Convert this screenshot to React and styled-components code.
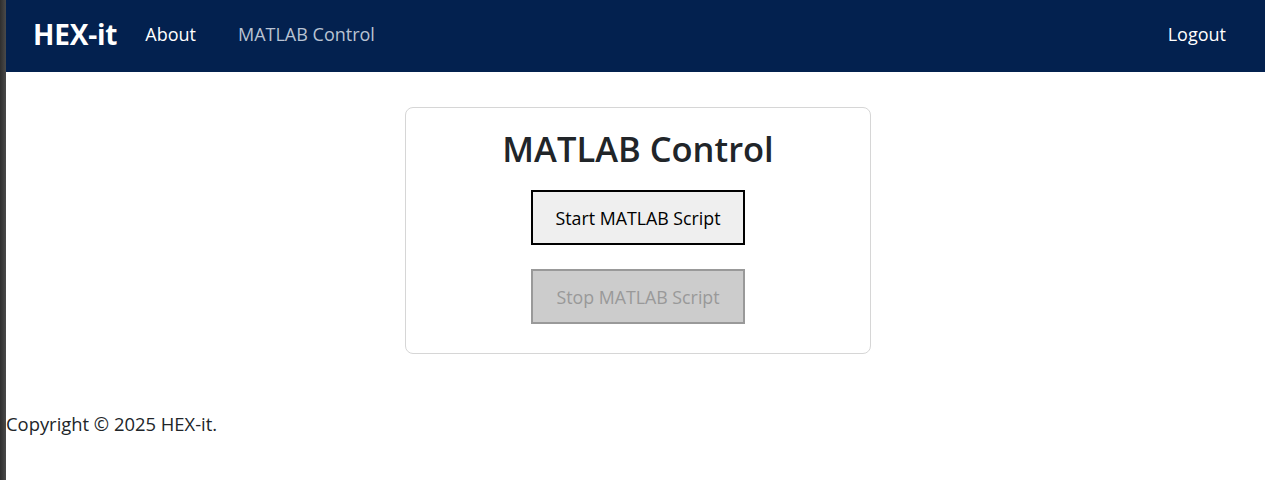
import React from 'react'
import styled, { createGlobalStyle } from 'styled-components'

const GlobalStyle = createGlobalStyle`
  html, body {
    margin: 0;
    padding: 0;
    background: #ffffff;
  }
  body {
    font-family: "Open Sans", "Noto Sans", sans-serif;
    color: #212529;
  }
`;

const App = () => {
  return (
    <>
      <GlobalStyle />
      <Frame>
        <Edge />
        <Page>
          <Navbar>
            <Brand>HEX-it</Brand>
            <NavLinks>
              <NavLink>About</NavLink>
              <NavLink $muted>MATLAB Control</NavLink>
            </NavLinks>
            <NavLink>Logout</NavLink>
          </Navbar>

          <Main>
            <Card>
              <Title>MATLAB Control</Title>
              <ScriptButton>Start MATLAB Script</ScriptButton>
              <ScriptButton disabled>Stop MATLAB Script</ScriptButton>
            </Card>
          </Main>

          <Footer>Copyright © 2025 HEX-it.</Footer>
        </Page>
      </Frame>
    </>
  )
};

const Frame = styled.div`
  display: flex;
  min-height: 480px;
`;

const Edge = styled.div`
  width: 6px;
  flex-shrink: 0;
  background: linear-gradient(to right, #2e2e2e, #4a4a4a);
`;

const Page = styled.div`
  flex: 1;
  display: flex;
  flex-direction: column;
`;

const Navbar = styled.nav`
  height: 72px;
  box-sizing: border-box;
  background-color: #03214f;
  display: flex;
  align-items: center;
  padding: 0 39px 5px 27px;
`;

const Brand = styled.div`
  font-size: 28px;
  font-weight: 700;
  color: #ffffff;
  letter-spacing: -0.2px;
`;

const NavLinks = styled.div`
  display: flex;
  flex: 1;
  gap: 42px;
  margin-left: 28px;
`;

const NavLink = styled.a`
  font-size: 18px;
  color: ${p => (p.$muted ? '#b9c3d3' : '#ffffff')};
  cursor: pointer;
  text-decoration: none;
`;

const Main = styled.main`
  display: flex;
  justify-content: center;
  padding-top: 35px;
  padding-left: 5px;
`;

const Card = styled.section`
  width: 464px;
  border: 1px solid #d6d6d6;
  border-radius: 8px;
  padding: 16px 0 29px;
  display: flex;
  flex-direction: column;
  align-items: center;
  gap: 24px;
`;

const Title = styled.h1`
  font-size: 34.5px;
  font-weight: 600;
  color: #212529;
  margin: 0 0 -8px;
  line-height: 50px;
`;

const ScriptButton = styled.button`
  width: 214px;
  height: 55px;
  font-family: "Open Sans", "Noto Sans", sans-serif;
  font-size: 17.8px;
  color: #000000;
  background-color: #efefef;
  border: 2px solid #000000;
  cursor: pointer;

  &:disabled {
    color: #999999;
    background-color: #cccccc;
    border-color: #999999;
    cursor: default;
  }
`;

const Footer = styled.footer`
  margin-top: 58px;
  font-size: 18.4px;
  line-height: 24px;
  color: #212529;
`;

export default App
